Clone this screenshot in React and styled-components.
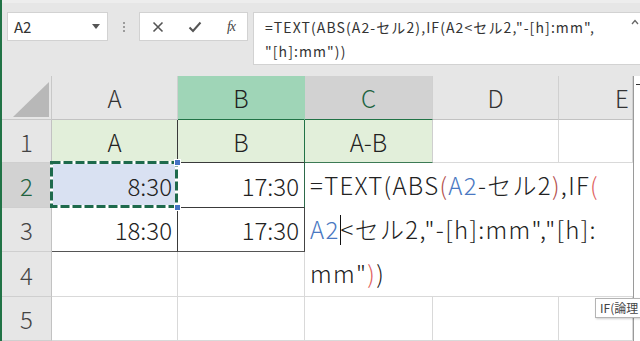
import React from 'react';
import styled, { createGlobalStyle } from 'styled-components';

const GlobalStyle = createGlobalStyle`
  html, body { margin: 0; padding: 0; background: #e6e6e6; overflow: hidden; }
  body { font-family: "Noto Sans CJK JP", "Noto Sans", sans-serif; }
`;

const Window = styled.div`
  position: relative;
  width: 640px;
  height: 341px;
  box-sizing: border-box;
  border-left: 2px solid #217346;
  background: #e6e6e6;
  display: flex;
  flex-direction: column;
  overflow: hidden;
`;

const TopBar = styled.div`
  height: 76px;
  flex: none;
  box-sizing: border-box;
  border-top: 3px solid #ededed;
  padding: 9px 0 0 5px;
  display: flex;
  align-items: flex-start;
`;

const NameBox = styled.div`
  width: 101px;
  height: 29px;
  box-sizing: border-box;
  background: #fff;
  border: 1px solid #d2d2d2;
  display: flex;
  align-items: center;
  justify-content: space-between;
  padding: 0 7px 0 6px;
  font-size: 15px;
  color: #333;
`;

const Dots = styled.div`
  width: 31px;
  height: 29px;
  display: flex;
  flex-direction: column;
  align-items: center;
  justify-content: center;
  gap: 2px;
  & span { width: 2px; height: 2px; background: #9c9c9c; }
`;

const ButtonBox = styled.div`
  width: 109px;
  height: 29px;
  box-sizing: border-box;
  background: #fff;
  border: 1px solid #d2d2d2;
  display: grid;
  grid-template-columns: 36px 38px 34px;
  align-items: center;
  justify-items: center;
  color: #555;
`;

const Fx = styled.span`
  font-family: "Liberation Serif", serif;
  font-style: italic;
  font-size: 14px;
  color: #444;
  letter-spacing: -1px;
`;

const FormulaInput = styled.div`
  margin-left: 5px;
  flex: 1;
  height: 53px;
  box-sizing: border-box;
  background: #fff;
  border: 1px solid #d2d2d2;
  border-right: none;
  display: flex;
  font-size: 14px;
  line-height: 24px;
  letter-spacing: 1.1px;
  color: #333;
`;

const FormulaText = styled.div`
  flex: 1;
  padding: 2px 0 0 11px;
  white-space: nowrap;
  overflow: hidden;
`;

const Collapse = styled.div`
  flex: none;
  width: 9px;
  padding-top: 6px;
  display: flex;
  justify-content: flex-start;
`;

const Sheet = styled.div`
  flex: 1;
  display: grid;
  grid-template-columns: 50px 126px 127px 128px 126px 74px 1fr;
  grid-template-rows: 44px 43px 45px 44px 45px 44px;
  background: #fff;
  font-weight: 300;
`;

const Corner = styled.div`
  background: #e6e6e6;
  border-right: 1px solid #c8c8c8;
  border-bottom: 1px solid #c8c8c8;
  display: flex;
  align-items: flex-end;
  justify-content: flex-end;
  padding: 0 2px 2px 0;
  box-sizing: border-box;
`;

const headerBg = { normal: '#e6e6e6', green: '#9fd5b7', active: '#d2d2d2' };
const headerFg = { normal: '#333', green: '#222', active: '#21633f' };
const headerLine = { normal: '#c2c2c2', green: '#217346', active: '#217346' };

const ColHeader = styled.div`
  background: ${p => headerBg[p.$state]};
  color: ${p => headerFg[p.$state]};
  border-right: 1px solid ${p => (p.$state === 'green' ? '#9fd5b7' : '#d0d0d0')};
  border-bottom: 1px solid ${p => headerLine[p.$state]};
  box-sizing: border-box;
  font-size: 24px;
  display: flex;
  align-items: center;
  justify-content: ${p => (p.$clip ? 'flex-start' : 'center')};
  overflow: hidden;
  & > span {
    flex: none;
    width: ${p => (p.$clip ? '126px' : 'auto')};
    text-align: center;
  }
`;

const RowHeader = styled.div`
  background: ${p => (p.$active ? '#d2d2d2' : '#e6e6e6')};
  color: ${p => (p.$active ? '#21633f' : '#444')};
  border-right: 1px solid #c2c2c2;
  border-bottom: 1px solid #cfcfcf;
  box-sizing: border-box;
  font-size: 24px;
  display: flex;
  align-items: center;
  justify-content: center;
`;

const fills = { none: '#fff', green: '#e2efda', blue: '#d9e1f2' };

const Cell = styled.div`
  position: relative;
  background: ${p => fills[p.$fill || 'none']};
  border-right: 1px solid ${p => p.$br || '#d9d9d9'};
  border-bottom: 1px solid ${p => p.$bb || '#d9d9d9'};
  box-sizing: border-box;
  font-size: 24px;
  color: #222;
  display: flex;
  align-items: center;
  justify-content: ${p => (p.$align === 'right' ? 'flex-end' : 'center')};
  padding: 0 5px;
`;

const Ants = styled.svg`
  position: absolute;
  left: -2px;
  top: -2px;
  width: calc(100% + 3px);
  height: calc(100% + 3px);
  overflow: visible;
  pointer-events: none;
`;

const Handle = styled.div`
  position: absolute;
  width: 5px;
  height: 5px;
  background: #4472c4;
  border: 1px solid #fff;
  right: -4px;
  z-index: 2;
  ${p => (p.$top ? 'top: -4px;' : 'bottom: -4px;')}
`;

const EditBox = styled.div`
  grid-column: 4 / 7;
  grid-row: 3 / 6;
  background: #fff;
  border-bottom: 1px solid #d9d9d9;
  box-sizing: border-box;
  padding: 0 0 0 5px;
  font-size: 24px;
  line-height: 44px;
  letter-spacing: 1.3px;
  color: #222;
  white-space: nowrap;
  overflow: hidden;
  z-index: 1;
`;

const Line = styled.div`
  height: 44px;
`;

const Tok = styled.span`
  color: ${p => p.$c || '#222'};
`;

const Caret = styled.span`
  display: inline-block;
  width: 1px;
  height: 30px;
  background: #111;
  vertical-align: -6px;
`;

const Strip = styled.div`
  grid-column: 7;
  grid-row: 1 / -1;
  background: #fff;
  border-left: 1px solid #9a9a9a;
  position: relative;
  & > i {
    position: absolute;
    left: 2px;
    top: 8px;
    width: 4px;
    height: 1px;
    background: #333;
  }
`;

const Tooltip = styled.div`
  position: absolute;
  left: 593px;
  top: 298px;
  width: 60px;
  height: 20px;
  box-sizing: border-box;
  background: #fff;
  border: 1px solid #b4b4b4;
  box-shadow: 1px 1px 2px rgba(0,0,0,0.2);
  padding: 0 0 0 4px;
  font-size: 12px;
  line-height: 18px;
  color: #444;
  white-space: nowrap;
  z-index: 2;
`;

const RED1 = '#b4504c';
const RED2 = '#e0605e';
const BLUE = '#4a78c2';
const DARK = '#3a3a3a';
const GRN = '#217346';

export default function App() {
  return (
    <>
      <GlobalStyle />
      <Window>
        <TopBar>
          <NameBox>
            <span>A2</span>
            <svg width="8" height="5" viewBox="0 0 8 5"><path d="M0 0h8L4 5z" fill="#555" /></svg>
          </NameBox>
          <Dots><span /><span /><span /></Dots>
          <ButtonBox>
            <svg width="12" height="12" viewBox="0 0 12 12"><path d="M1.5 1.5l9 9M10.5 1.5l-9 9" stroke="#555" strokeWidth="1.6" /></svg>
            <svg width="14" height="12" viewBox="0 0 14 12"><path d="M1.5 6.5l3.5 3.5 7.5-8.5" stroke="#555" strokeWidth="2" fill="none" /></svg>
            <Fx>fx</Fx>
          </ButtonBox>
          <FormulaInput>
            <FormulaText>
              <div>=TEXT(ABS(A2-セル2),IF(A2&lt;セル2,"-[h]:mm",</div>
              <div>"[h]:mm"))</div>
            </FormulaText>
            <Collapse>
              <svg width="8" height="6" viewBox="0 0 8 6"><path d="M1 5l3-3.5L7 5" stroke="#666" strokeWidth="1.3" fill="none" /></svg>
            </Collapse>
          </FormulaInput>
        </TopBar>
        <Sheet>
          <Corner>
            <svg width="36" height="35" viewBox="0 0 36 35"><path d="M36 0V35H0z" fill="#b8b8b8" /></svg>
          </Corner>
          <ColHeader $state="normal"><span>A</span></ColHeader>
          <ColHeader $state="green"><span>B</span></ColHeader>
          <ColHeader $state="active"><span>C</span></ColHeader>
          <ColHeader $state="normal"><span>D</span></ColHeader>
          <ColHeader $state="normal" $clip><span>E</span></ColHeader>
          <Strip><i /></Strip>

          <RowHeader>1</RowHeader>
          <Cell $fill="green" $br={DARK} $bb={DARK}>A</Cell>
          <Cell $fill="green" $br={GRN} $bb={DARK}>B</Cell>
          <Cell $fill="green" $br="#cfcfcf" $bb="#3c7a55">A-B</Cell>
          <Cell />
          <Cell />

          <RowHeader $active>2</RowHeader>
          <Cell $fill="blue" $align="right" $br={DARK} $bb={DARK}>
            8:30
            <Ants preserveAspectRatio="none">
              <rect x="1.5" y="1.5" width="calc(100% - 3px)" height="calc(100% - 3px)" fill="none" stroke="#fff" strokeWidth="3" />
              <rect x="1.5" y="1.5" width="calc(100% - 3px)" height="calc(100% - 3px)" fill="none" stroke="#1e6a4c" strokeWidth="3" strokeDasharray="9 3" />
            </Ants>
            <Handle $top />
            <Handle />
          </Cell>
          <Cell $align="right" $br="#2d6a4a" $bb={DARK}>17:30</Cell>

          <RowHeader>3</RowHeader>
          <Cell $align="right" $br={DARK} $bb="#555">18:30</Cell>
          <Cell $align="right" $br="#444" $bb="#555">17:30</Cell>

          <RowHeader>4</RowHeader>
          <Cell />
          <Cell />

          <RowHeader>5</RowHeader>
          <Cell />
          <Cell />
          <Cell />
          <Cell />
          <Cell />

          <EditBox>
            <Line>
              =TEXT(ABS<Tok $c={RED1}>(</Tok><Tok $c={BLUE}>A2</Tok>-セル2<Tok $c={RED1}>)</Tok>,IF<Tok $c={RED2}>(</Tok>
            </Line>
            <Line>
              <Tok $c={BLUE}>A2</Tok><Caret />&lt;セル2,"-[h]:mm","[h]:
            </Line>
            <Line>
              mm"<Tok $c={RED2}>)</Tok>)
            </Line>
          </EditBox>
        </Sheet>
        <Tooltip>IF(論理</Tooltip>
      </Window>
    </>
  );
}
